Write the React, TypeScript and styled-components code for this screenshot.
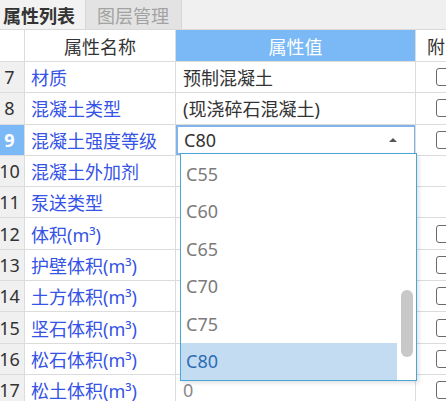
import styled, { createGlobalStyle } from 'styled-components';

const GlobalStyle = createGlobalStyle`
  html, body {
    margin: 0;
    padding: 0;
    background: #ffffff;
  }
  body {
    font-family: "Noto Sans", "Noto Sans CJK SC", sans-serif;
    overflow: hidden;
  }
`;

type Row = {
    no: number;
    name: string;
    value?: string;
    check?: boolean;
    muted?: boolean;
    combo?: boolean;
};

const rows: Row[] = [
    {no: 7, name: '材质', value: '预制混凝土', check: true},
    {no: 8, name: '混凝土类型', value: '(现浇碎石混凝土)', check: true},
    {no: 9, name: '混凝土强度等级', value: 'C80', check: true, combo: true},
    {no: 10, name: '混凝土外加剂'},
    {no: 11, name: '泵送类型'},
    {no: 12, name: '体积(m³)', check: true},
    {no: 13, name: '护壁体积(m³)', check: true},
    {no: 14, name: '土方体积(m³)', check: true},
    {no: 15, name: '坚石体积(m³)', check: true},
    {no: 16, name: '松石体积(m³)', check: true},
    {no: 17, name: '松土体积(m³)', value: '0', check: true, muted: true},
];

const grades = ['C55', 'C60', 'C65', 'C70', 'C75', 'C80'];
const selected = 'C80';

export default function App() {
    return (
        <Page>
            <GlobalStyle/>
            <TabBar>
                <Tab active>属性列表</Tab>
                <Tab>图层管理</Tab>
            </TabBar>
            <Table>
                <HeaderRow>
                    <HeadCell/>
                    <HeadCell>属性名称</HeadCell>
                    <HeadCell accent>属性值</HeadCell>
                    <HeadCell>附</HeadCell>
                </HeaderRow>
                {rows.map(row => (
                    <BodyRow key={row.no}>
                        <NumCell active={row.combo}>{row.no}</NumCell>
                        <NameCell>{row.name}</NameCell>
                        <ValueCell muted={row.muted}>
                            {row.combo ? (
                                <Combo>
                                    <span>{row.value}</span>
                                    <Caret/>
                                </Combo>
                            ) : row.value}
                        </ValueCell>
                        <CheckCell>{row.check && <Checkbox/>}</CheckCell>
                    </BodyRow>
                ))}
                <Dropdown>
                    <OptionList>
                        {grades.map(g => (
                            <Option key={g} selected={g === selected}>{g}</Option>
                        ))}
                    </OptionList>
                    <ScrollTrack>
                        <ScrollThumb offset={136}/>
                    </ScrollTrack>
                </Dropdown>
            </Table>
        </Page>
    );
}

const Page = styled.div`
  width: 446px;
  height: 401px;
  overflow: hidden;
  background: #ffffff;
  color: #333333;
`;

const TabBar = styled.div`
  display: flex;
  height: 30px;
  background: #f0f0f0;
  border-bottom: 1px solid #d9d9d9;
  box-sizing: border-box;
`;

const Tab = styled.div<{ active?: boolean }>`
  display: flex;
  align-items: center;
  padding: 0 ${p => (p.active ? '10px 0 3px' : '12px 0 11px')};
  font-size: 18px;
  font-weight: ${p => (p.active ? 700 : 400)};
  color: ${p => (p.active ? '#333333' : '#a2a2a2')};
  background: ${p => (p.active ? '#f2f2f2' : '#e3e3e3')};
  border-right: 1px solid #d6d6d6;
  white-space: nowrap;
`;

const Table = styled.div`
  position: relative;
`;

const columns = `
  display: grid;
  grid-template-columns: 25px 151px 240px 40px;
`;

const HeaderRow = styled.div`
  ${columns};
  height: 32px;
  border-bottom: 1px solid #dcdcdc;
  box-sizing: border-box;
`;

const HeadCell = styled.div<{ accent?: boolean }>`
  display: flex;
  align-items: center;
  justify-content: center;
  font-size: 18px;
  color: ${p => (p.accent ? '#ffffff' : '#333333')};
  background: ${p => (p.accent ? '#7ab8f6' : '#ffffff')};
  border-right: 1px solid #dcdcdc;
  white-space: nowrap;
  overflow: hidden;
  &:last-child {
    justify-content: flex-start;
    padding-left: 11px;
  }
`;

const BodyRow = styled.div`
  ${columns};
  height: 31.3px;
  border-bottom: 1px solid #dcdcdc;
  box-sizing: border-box;
`;

const Cell = styled.div`
  display: flex;
  align-items: center;
  font-size: 18px;
  white-space: nowrap;
  overflow: hidden;
  border-right: 1px solid #dcdcdc;
  box-sizing: border-box;
`;

const NumCell = styled(Cell)<{ active?: boolean }>`
  justify-content: center;
  padding-right: 5px;
  color: ${p => (p.active ? '#ffffff' : '#333333')};
  font-weight: ${p => (p.active ? 700 : 400)};
  background: ${p => (p.active ? '#7ab8f6' : '#f0f0f0')};
`;

const NameCell = styled(Cell)`
  padding-left: 6px;
  color: #3553e6;
`;

const ValueCell = styled(Cell)<{ muted?: boolean }>`
  padding-left: 7px;
  color: ${p => (p.muted ? '#8a8a8a' : '#333333')};
  position: relative;
`;

const Combo = styled.div`
  position: absolute;
  inset: 0 -1px 0 0;
  display: flex;
  align-items: center;
  justify-content: space-between;
  padding: 0 17px 0 6px;
  border: 2px solid #7fb3ea;
  background: #ffffff;
  color: #333333;
  box-sizing: border-box;
`;

const Caret = styled.span`
  width: 0;
  height: 0;
  border-left: 4px solid transparent;
  border-right: 4px solid transparent;
  border-bottom: 4px solid #555555;
`;

const CheckCell = styled(Cell)`
  padding-left: 20px;
  border-right: none;
`;

const Checkbox = styled.span`
  width: 18px;
  height: 18px;
  border: 1.5px solid #6a6a6a;
  border-radius: 3px;
  box-sizing: border-box;
  flex-shrink: 0;
`;

const Dropdown = styled.div`
  position: absolute;
  top: 123px;
  left: 180px;
  width: 237px;
  height: 228px;
  display: flex;
  background: #ffffff;
  border: 1.5px solid #4aa6d8;
  box-sizing: border-box;
  box-shadow: 2px 2px 4px rgba(0, 0, 0, 0.12);
`;

const OptionList = styled.div`
  flex: 1;
  display: flex;
  flex-direction: column;
  padding-top: 1px;
`;

const Option = styled.div<{ selected?: boolean }>`
  height: 37.5px;
  display: flex;
  align-items: center;
  padding-left: 5px;
  font-size: 18px;
  color: ${p => (p.selected ? '#2d6cb5' : '#7b7b7b')};
  background: ${p => (p.selected ? '#c4dcf2' : 'transparent')};
`;

const ScrollTrack = styled.div`
  width: 19px;
  display: flex;
  flex-direction: column;
  align-items: center;
`;

const ScrollThumb = styled.div<{ offset: number }>`
  margin-top: ${p => p.offset}px;
  width: 12px;
  height: 67px;
  border-radius: 6px;
  background: #c8c8c8;
`;
